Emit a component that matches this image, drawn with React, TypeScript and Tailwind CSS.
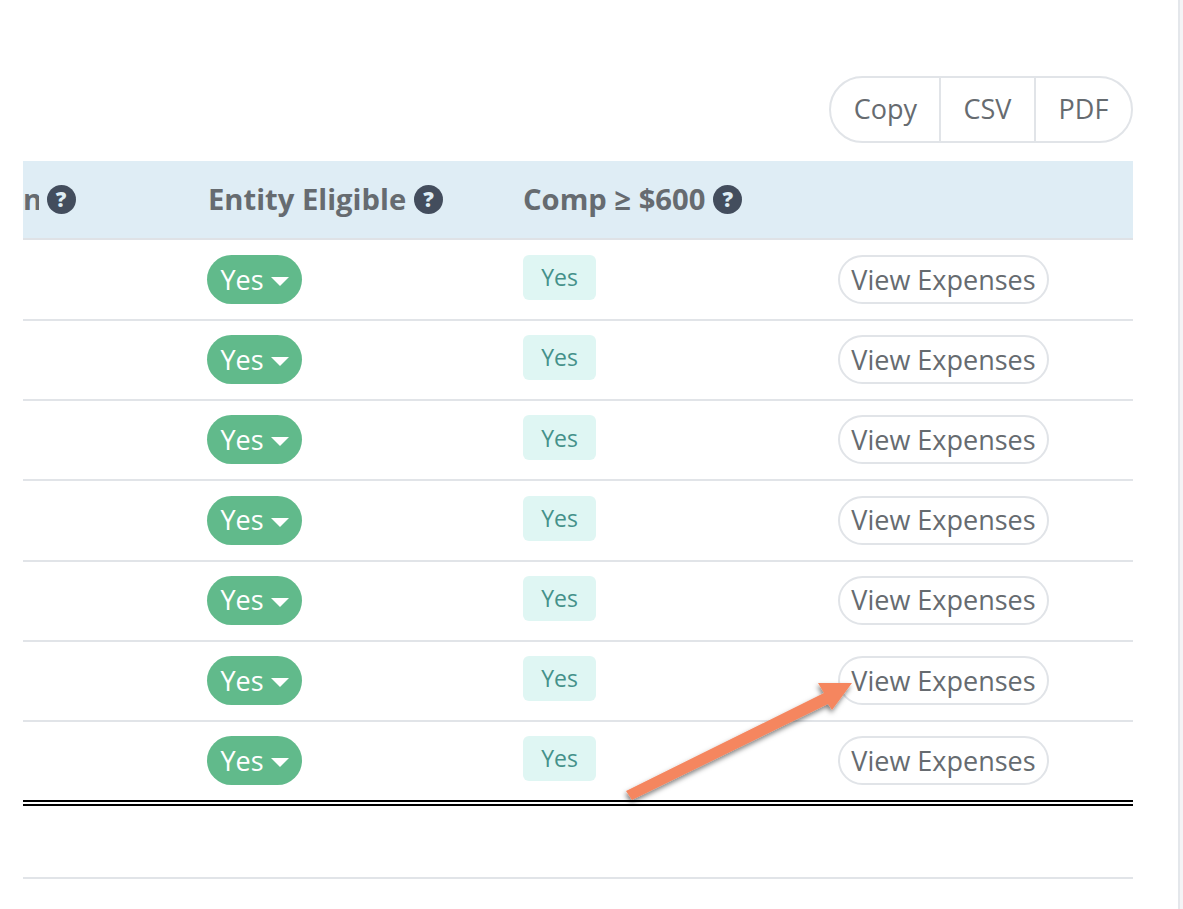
const ROWS = [0, 1, 2, 3, 4, 5, 6];

function HelpDot() {
  return (
    <span className="inline-flex h-[29px] w-[29px] items-center justify-center rounded-full bg-[#434d5d] text-[21px] font-extrabold leading-none text-[#dfedf5]">
      ?
    </span>
  );
}

export default function App() {
  return (
    <div className="relative h-[909px] w-[1183px] overflow-hidden bg-white font-['Open_Sans',sans-serif] text-[#666b70]">
      <div className="absolute right-0 top-0 h-full w-[5px] border-l-2 border-[#e4e7eb] bg-[#f4f4f6]" />

      <div className="ml-[23px] w-[1110px] pt-[76px]">
        <div className="flex justify-end">
          <div className="flex h-[67px] overflow-hidden rounded-full border-2 border-[#e1e4e8] text-[27px]">
            <span className="flex w-[110px] items-center justify-center border-r-2 border-[#e1e4e8] pl-[1px]">Copy</span>
            <span className="flex w-[95px] items-center justify-center border-r-2 border-[#e1e4e8]">CSV</span>
            <span className="flex w-[95px] items-center justify-center">PDF</span>
          </div>
        </div>

        <div className="mt-[18px]">
          <div className="mb-[0.8px] grid h-[79px] grid-cols-[184px_316px_315px_295px] items-center border-b-2 border-[#dfe2e6] bg-[#dfedf5] text-[29.2px] font-bold">
            <div className="flex items-center gap-[8px]">
              <span className="w-[15.5px] overflow-hidden text-right">n</span>
              <HelpDot />
            </div>
            <div className="flex items-center gap-[8px] pl-[1px]">
              <span>Entity Eligible</span>
              <HelpDot />
            </div>
            <div className="flex items-center gap-[8px]">
              <span>Comp ≥ $600</span>
              <HelpDot />
            </div>
            <div />
          </div>

          {ROWS.map((row) => (
            <div
              key={row}
              className={
                row === 6
                  ? 'grid h-[78px] grid-cols-[184px_316px_315px_295px] items-start pt-[14.2px]'
                  : 'grid h-[80.2px] grid-cols-[184px_316px_315px_295px] items-start border-b-2 border-[#e1e4e8] pt-[14.2px]'
              }
            >
              <div />
              <div>
                <span className="inline-flex h-[49px] w-[95px] items-center justify-center gap-[7px] rounded-full bg-[#61ba8b] pt-[1px] text-[27px] text-white">
                  Yes
                  <span className="mt-[3px] h-0 w-0 border-x-[9px] border-t-[9px] border-x-transparent border-t-white" />
                </span>
              </div>
              <div>
                <span className="inline-flex h-[45px] w-[73px] items-center justify-center rounded-[6px] bg-[#dff6f3] text-[23px] font-medium text-[#44918a]">
                  Yes
                </span>
              </div>
              <div>
                <span className="inline-flex h-[49px] w-[211px] items-center justify-center rounded-full border-2 border-[#e1e4e8] bg-white pt-[1px] text-[27px]">
                  View Expenses
                </span>
              </div>
            </div>
          ))}
        </div>

        <div className="h-[6px] border-y-2 border-black" />
        <div className="h-[73px] border-b-2 border-[#e1e4e8]" />
      </div>

      {/* annotation arrow over the table */}
      <svg className="absolute left-[610px] top-[670px]" width="260" height="145" viewBox="610 670 260 145">
        <defs>
          <filter id="arrow-shadow" x="-20%" y="-20%" width="140%" height="150%">
            <feDropShadow dx="-1" dy="3" stdDeviation="2.5" floodColor="#000" floodOpacity="0.5" />
          </filter>
        </defs>
        <path
          d="M626 791 L824 693 L818 683 L852 683 L832 710 L828 704 L632 800 Z"
          fill="#f5865f"
          filter="url(#arrow-shadow)"
        />
      </svg>
    </div>
  );
}
